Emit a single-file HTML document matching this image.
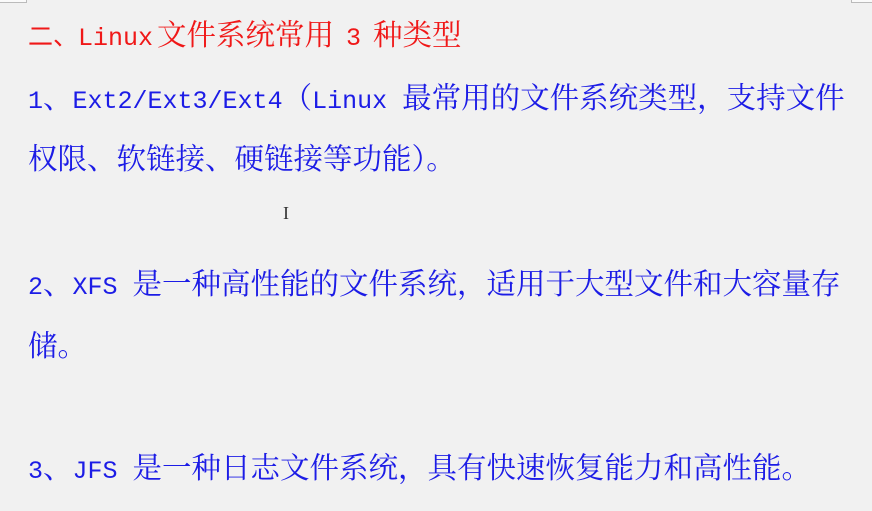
<!DOCTYPE html>
<html><head><meta charset="utf-8"><style>
html,body{margin:0;padding:0;}
body{width:872px;height:511px;background:#f1f1f1;position:relative;overflow:hidden;
font-family:"Noto Serif CJK SC","Noto Serif CJK JP","Noto Sans CJK SC",serif;font-size:29.5px;}
.l{position:absolute;left:28px;white-space:nowrap;line-height:40px;color:#1c1ce6;}
.r{color:#f01818;}
.m{font-family:"Liberation Mono",monospace;font-size:25px;}
.c1{position:absolute;left:0;top:0;width:26px;height:2px;border-bottom:1px solid #bbb;border-right:1px solid #bbb;background:#fafafa;}
.c2{position:absolute;right:0;top:0;width:20px;height:2px;border-bottom:1px solid #bbb;border-left:1px solid #bbb;background:#fafafa;}
.cur{position:absolute;left:283px;top:203px;font-family:"Liberation Serif",serif;font-size:18px;color:#333;}
</style></head><body>
<div class="c1"></div><div class="c2"></div>
<div class="l r" style="top:13px"><span class="m">二、Linux</span><span style="margin-left:4px">文件系统常用</span><span class="m" style="margin:0 -3px"> 3 </span>种类型</div>
<div class="l" style="top:76px"><span class="m">1</span>、<span class="m">Ext2/Ext3/Ext4</span>（<span class="m">Linux </span>最常用的文件系统类型，支持文件</div>
<div class="l" style="top:137px">权限、软链接、硬链接等功能）。</div>
<div class="cur">I</div>
<div class="l" style="top:262px"><span class="m">2</span>、<span class="m">XFS </span>是一种高性能的文件系统，适用于大型文件和大容量存</div>
<div class="l" style="top:324px">储。</div>
<div class="l" style="top:446px"><span class="m">3</span>、<span class="m">JFS </span>是一种日志文件系统，具有快速恢复能力和高性能。</div>
</body></html>
